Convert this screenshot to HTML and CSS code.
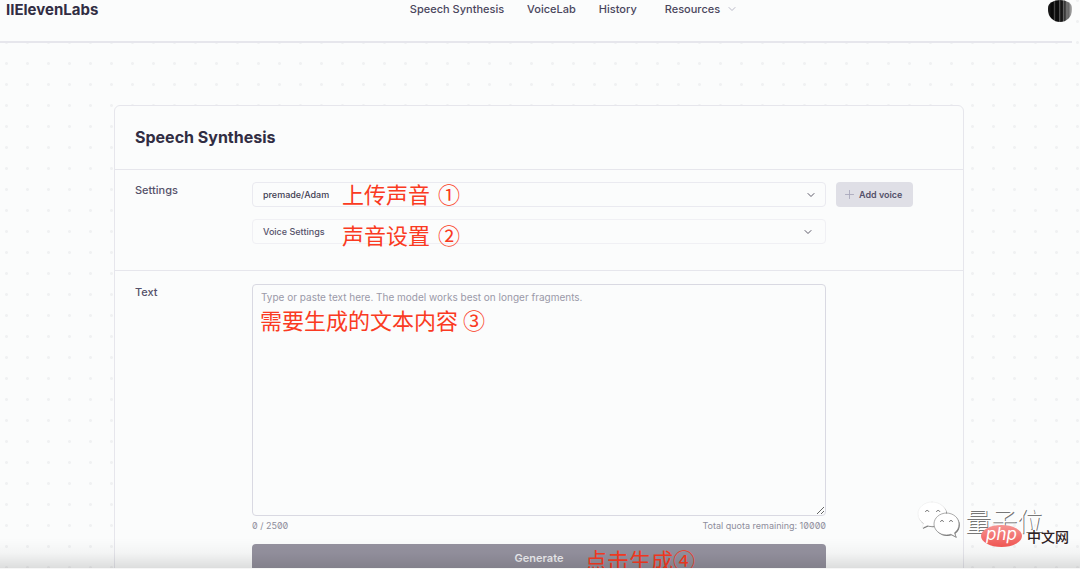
FILE: index.html
```html
<!DOCTYPE html>
<html lang="en">
<head>
<meta charset="utf-8">
<meta name="viewport" content="width=device-width, initial-scale=1">
<title>Speech Synthesis</title>
<link rel="stylesheet" href="styles.css">
</head>
<body>
<div class="screen">
  <header class="topbar">
    <a class="brand" href="#">IIElevenLabs</a>
    <nav class="nav">
      <a href="#">Speech Synthesis</a>
      <a href="#">VoiceLab</a>
      <a href="#">History</a>
      <button class="nav-menu" type="button">Resources
        <svg class="nav-chevron" viewBox="0 0 8 8"><path d="M1 2.5 4 5.5 7 2.5"/></svg>
      </button>
    </nav>
    <button class="avatar" type="button" aria-label="Account"></button>
  </header>

  <main class="card">
    <h1 class="card-title">Speech Synthesis</h1>

    <section class="row settings">
      <label class="row-label" for="voice">Settings</label>
      <div class="stack">
        <div class="select-wrap">
          <select class="field voice" id="voice"><option>premade/Adam</option></select>
          <svg class="chevron" viewBox="0 0 10 10"><path d="M2 3.5 5 6.5 8 3.5"/></svg>
          <span class="note note-voice">上传声音<span class="num">①</span></span>
        </div>
        <div class="select-wrap">
          <button class="field disclosure" type="button">Voice Settings
            <svg class="inline-chevron" viewBox="0 0 10 10"><path d="M2 3.5 5 6.5 8 3.5"/></svg>
          </button>
          <span class="note note-settings">声音设置<span class="num">②</span></span>
        </div>
      </div>
      <button class="add" type="button">
        <svg class="plus" viewBox="0 0 10 10"><path d="M5 .5v9M.5 5h9"/></svg>
        Add voice
      </button>
    </section>

    <section class="row text-row">
      <label class="row-label" for="text">Text</label>
      <div class="editor">
        <div class="text-wrap">
          <textarea class="text" id="text" placeholder="Type or paste text here. The model works best on longer fragments."></textarea>
          <span class="note note-text">需要生成的文本内容 ③</span>
        </div>
        <div class="quota"><span>0 / 2500</span><span>Total quota remaining: 10000</span></div>
        <div class="generate-wrap">
          <button class="generate" type="button">Generate</button>
          <span class="note note-generate">点击生成④</span>
        </div>
      </div>
    </section>
  </main>

  <div class="fade"></div>

  <div class="watermark">
    <svg class="wechat" viewBox="0 0 44 38">
      <g class="wechat-shade" transform="translate(.8 1)">
        <path d="M15 1C7 1 1 6.500 1 13c0 4 2 7 5.500 9.500L5 27l5.500-2.500c1.500.5 3 .7 4.500.7 8 0 14.500-5.500 14.500-12.200S23 1 15 1Z"/>
        <path d="M29.500 12C22.500 12 17 17 17 23s5.500 11 12.500 11c1.500 0 3-.3 4.300-.7L39 36l-1.500-4.200C40.500 29.700 42 26.500 42 23c0-6-5.500-11-12.500-11Z"/>
      </g>
      <g class="wechat-face">
        <path d="M15 1C7 1 1 6.500 1 13c0 4 2 7 5.500 9.500L5 27l5.500-2.500c1.500.5 3 .7 4.500.7 8 0 14.500-5.500 14.500-12.200S23 1 15 1Z"/>
        <path class="wechat-edge" d="M29.500 12C22.500 12 17 17 17 23s5.500 11 12.500 11c1.500 0 3-.3 4.300-.7L39 36l-1.500-4.200C40.500 29.700 42 26.500 42 23c0-6-5.500-11-12.500-11Z"/>
      </g>
      <path class="wechat-eyes" d="M8.500 10.500a1.800 1.800 0 0 1 3.300 0M19.500 10.500a1.800 1.800 0 0 1 3.300 0M23.500 20.500a1.600 1.600 0 0 1 3 0M32.500 20.500a1.600 1.600 0 0 1 3 0"/>
    </svg>
    <span class="watermark-name">量子位</span>
  </div>
  <div class="site"><span class="site-php">php</span><span class="site-name">中文网</span></div>
</div>
</body>
</html>
```
FILE: styles.css
```css
:root {
  --ink: #312d43;
  --text: #55516a;
  --muted: #9a99a8;
  --line: #e6e6ec;
  --paper: #fbfcfc;
  --red: #fa3a22;
}

* { box-sizing: border-box; }

body {
  margin: 0;
  background: var(--paper);
  color: var(--text);
  font: 500 11px/16px Inter, "Noto Sans CJK SC", sans-serif;
}

button, select, textarea { font: inherit; color: inherit; margin: 0; }
a { color: inherit; text-decoration: none; }
svg { fill: none; stroke: currentColor; stroke-linecap: round; stroke-linejoin: round; }

.screen {
  position: relative;
  height: 100vh;
  padding-right: 2px;
  overflow: hidden;
  background: radial-gradient(circle, #f0f1f2 1px, transparent 2px) -4px -10px / 21px 21px var(--paper);
}

.topbar {
  display: grid;
  grid-template-columns: 1fr auto 1fr;
  align-items: start;
  height: 43px;
  margin-right: 6px;
  padding-left: 6px;
  background: var(--paper);
  border-bottom: 2px solid var(--line);
}
.brand { color: var(--ink); font-size: 15px; font-weight: 700; line-height: 20px; }
.nav {
  display: flex;
  gap: 23px;
  padding-left: 68px;
  line-height: 18px;
  color: #4a465c;
}
.nav-menu {
  display: flex;
  align-items: center;
  gap: 8px;
  margin-left: 5px;
  padding: 0;
  border: 0;
  background: none;
}
.nav-chevron { width: 8px; height: 8px; color: #b9b8c6; }
.avatar {
  justify-self: end;
  width: 24px;
  height: 22px;
  padding: 0;
  border: 0;
  border-radius: 12px 12px 12px 12px / 8px 8px 12px 12px;
  background: linear-gradient(90deg, #222, #080808 15% 22%, #444 27%, #0c0c0c 32% 45%, #666 49%, #151515 53% 60%, #666 65%, #2a2a2a 70%, #777 78%, #666 85%, #b5b5b5);
}

.card {
  width: 79%;
  max-width: 850px;
  margin: 62px auto 0;
  border: 1px solid var(--line);
  border-radius: 6px;
  background: var(--paper);
}
.card-title {
  margin: 0;
  padding: 19px 20px 20px;
  color: var(--ink);
  font-size: 16px;
  font-weight: 700;
  line-height: 24px;
}
.row {
  display: grid;
  grid-template-columns: 107px minmax(0, 1fr) 107px;
  column-gap: 10px;
  align-items: start;
  padding: 12px 20px 26px;
  border-top: 1px solid var(--line);
}
.text-row { padding-top: 13px; }
.stack { display: grid; gap: 12px; }

.select-wrap, .text-wrap, .generate-wrap { position: relative; }
.field {
  display: block;
  width: 100%;
  height: 25px;
  padding: 0 10px;
  border: 1px solid #f0f0f4;
  border-radius: 4px;
  background: transparent;
  font-size: 9px;
  text-align: left;
}
.voice { appearance: none; color: #413d52; border-color: #eaeaf0; }
.disclosure { display: flex; align-items: center; justify-content: space-between; padding-right: 12px; }
.chevron, .inline-chevron { width: 10px; height: 10px; color: #5d5a69; }
.chevron { position: absolute; right: 10px; top: 8px; pointer-events: none; }

.add {
  display: flex;
  align-items: center;
  justify-self: start;
  gap: 5px;
  height: 25px;
  padding: 0 11px 0 9px;
  border: 0;
  border-radius: 4px;
  background: #dfdfe6;
  font-size: 9px;
  font-weight: 600;
  white-space: nowrap;
}
.plus { width: 9px; height: 9px; color: #aaa9bc; }

.text {
  display: block;
  width: 100%;
  height: 232px;
  padding: 4px 8px;
  border: 1px solid #d9d9e2;
  border-radius: 4px;
  background: transparent;
  font-size: 10px;
  font-weight: 400;
  resize: vertical;
}
.text::placeholder { color: var(--muted); }
.quota {
  display: flex;
  justify-content: space-between;
  padding: 2px 0 10px;
  color: #8e8d9b;
  font-size: 9px;
  font-weight: 400;
  font-variant-numeric: slashed-zero;
}
.generate {
  display: block;
  width: 100%;
  height: 27px;
  padding: 0;
  border: 0;
  border-radius: 4px;
  background: #95929f;
  color: #f0f0f3;
  font-weight: 600;
}

.note {
  position: absolute;
  color: var(--red);
  font: 400 22px/28px "Noto Sans CJK SC", sans-serif;
  white-space: nowrap;
  pointer-events: none;
}
.num { margin-left: 8px; }
.note-voice { left: 90px; top: -3px; }
.note-settings { left: 90px; top: 1px; }
.note-text { left: 8px; top: 21px; }
.note-generate { left: 333px; top: 1px; }

.fade {
  position: absolute;
  inset: auto 0 1px;
  height: 30px;
  background: linear-gradient(transparent, rgba(0, 0, 0, .03) 50%, rgba(0, 0, 0, .12));
  box-shadow: 0 1px #f6f6f6;
  pointer-events: none;
}

.watermark {
  position: absolute;
  right: 37px;
  bottom: 30px;
  display: flex;
  align-items: center;
  gap: 4px;
}
.wechat { width: 44px; height: 38px; }
.wechat-shade { fill: #777; stroke: none; }
.wechat-face { fill: #fff; stroke: #d8d8d8; stroke-width: .3; }
.wechat-edge { stroke: #888; stroke-width: .7; }
.wechat-eyes { stroke: #777; }
.watermark-name {
  color: #fff;
  font: 300 26px/38px "Noto Sans CJK SC", sans-serif;
  text-shadow: 1px 1px #777;
}
.site {
  position: absolute;
  right: 11px;
  bottom: 22px;
  display: flex;
  align-items: center;
  gap: 5px;
}
.site-php {
  width: 41px;
  height: 22px;
  border-radius: 50%;
  background: linear-gradient(#f69593, #ef5552);
  color: #fff;
  font: italic 400 17px/19px Inter, sans-serif;
  text-align: center;
}
.site-name { color: #2f2225; font: 500 14px/20px "Noto Sans CJK SC", sans-serif; }
```
